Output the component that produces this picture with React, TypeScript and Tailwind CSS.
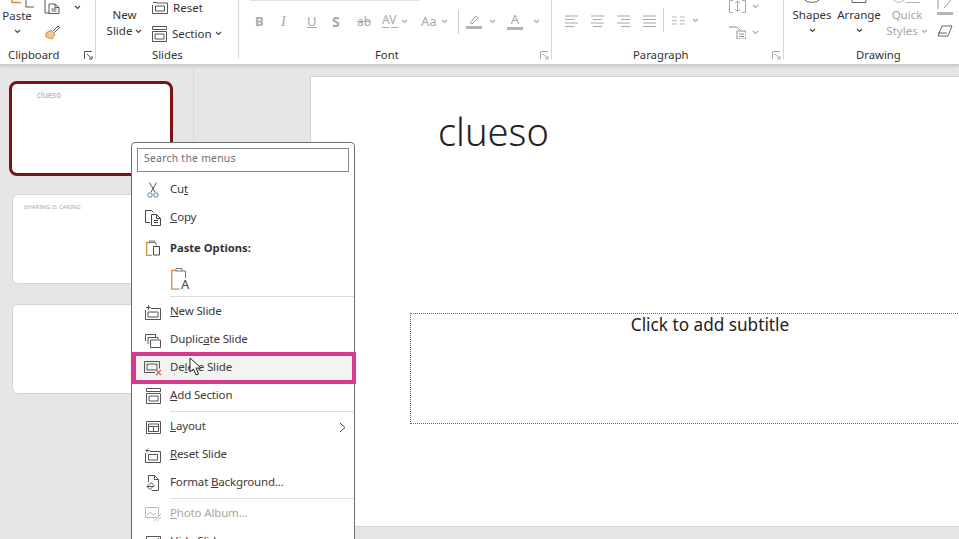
import type { ReactNode } from "react";

function Chev({ className = "", color = "#444" }: { className?: string; color?: string }) {
  return (
    <svg width="7" height="5" viewBox="0 0 7 5" className={className} fill="none" stroke={color} strokeWidth="1.1">
      <path d="M1 1l2.5 2.5L6 1" />
    </svg>
  );
}

function Launcher({ color = "#777" }: { color?: string }) {
  return (
    <svg width="9" height="9" viewBox="0 0 9 9" fill="none" stroke={color} strokeWidth="1">
      <path d="M.5 8V.5H8M3 3l5 5M8 5v3H5" />
    </svg>
  );
}

function Group({ width, label, labelPad, launcher, children }: { width: string; label: string; labelPad: string; launcher?: string; children: ReactNode }) {
  return (
    <div className={`flex h-[59px] shrink-0 flex-col border-r border-[#d6d6d6] ${width}`}>
      <div className="flex h-[47px] shrink-0 overflow-hidden">{children}</div>
      <div className={`flex h-[16px] shrink-0 items-center pr-[2px] text-[11.3px] leading-none text-[#333] ${labelPad}`}>
        <span>{label}</span>
        {launcher && (
          <span className="ml-auto">
            <Launcher color={launcher} />
          </span>
        )}
      </div>
    </div>
  );
}

function AlignIcon({ kind }: { kind: "l" | "c" | "r" | "j" }) {
  const short = kind === "l" ? "M1 6.5h9M1 13.5h9" : kind === "c" ? "M3 6.5h9M3 13.5h9" : kind === "r" ? "M5 6.5h9M5 13.5h9" : "M1 6.5h13M1 13.5h13";
  return (
    <svg width="15" height="15" viewBox="0 0 15 15" fill="none" stroke="#a8a8a8" strokeWidth="1" className="shrink-0">
      <path d={`M1 3h13M1 10h13 ${short}`} />
    </svg>
  );
}

function SlideGlyph({ kind }: { kind: string }) {
  const stroke = "#555";
  if (kind === "new")
    return (
      <svg width="16" height="15" viewBox="0 0 16 15" fill="none" stroke={stroke}>
        <path d="M6 3.500h9.500v11H.5V5M3 7h10v5H3zM3.500 0v5M1 2.500h5" />
      </svg>
    );
  if (kind === "dup")
    return (
      <svg width="16" height="15" viewBox="0 0 16 15" fill="none" stroke={stroke}>
        <path d="M.5 8V1.500h10V4M3 11V4.500h10V6M5.500 7h10v7.500h-10z" />
      </svg>
    );
  if (kind === "del")
    return (
      <svg width="18" height="16" viewBox="0 0 18 16" fill="none">
        <path d="M11 12.500H.5v-11h15v7M3 4h10v6H3z" stroke={stroke} />
        <path d="M12 10l5 5M17 10l-5 5" stroke="#e0604a" strokeWidth="1.300" />
      </svg>
    );
  if (kind === "sec")
    return (
      <svg width="15" height="16" viewBox="0 0 15 16" fill="none" stroke={stroke}>
        <path d="M.5.500h14v3H.5zM.5 5.500h14v10H.5zM3 8h9v5H3z" />
      </svg>
    );
  if (kind === "layout")
    return (
      <svg width="15" height="13" viewBox="0 0 15 13" fill="none" stroke={stroke}>
        <path d="M.5.500h14v12H.5zM2.500 3h10v7.500h-10zM2.500 5.500h10M7.500 5.500v5" />
      </svg>
    );
  if (kind === "reset")
    return (
      <svg width="16" height="15" viewBox="0 0 16 15" fill="none" stroke={stroke}>
        <path d="M5 3.500h10.500v11H.5V5M3.500 6.500h9v5.500h-9zM1 2.500h4M3 .5l-2 2 2 2" />
      </svg>
    );
  if (kind === "bg")
    return (
      <svg width="14" height="17" viewBox="0 0 14 17" fill="none" stroke={stroke}>
        <path d="M2.500 7V.5h6l4 4v11h-7M8.500.5v4h4M5 7.500l-4 4 3 3 4-4zM1 11.500h7" />
      </svg>
    );
  if (kind === "photo")
    return (
      <svg width="17" height="15" viewBox="0 0 17 15" fill="none" stroke="#bdbdbd">
        <path d="M.5.500h13v10H.5zM2 8l3-3 3 3 3-2M9 14l7-7M12 14l4-4" />
      </svg>
    );
  return (
    <svg width="15" height="13" viewBox="0 0 15 13" fill="none" stroke={stroke}>
      <path d="M.5.500h14v12H.5zM2 11L13 2" />
    </svg>
  );
}

type Item = { icon: string; text: ReactNode; active?: boolean; disabled?: boolean; arrow?: boolean };

function MenuRow({ item }: { item: Item }) {
  return (
    <div className={`flex h-[28px] items-center ${item.active ? "bg-[#f3f4f2]" : ""} ${item.disabled ? "text-[#a6a6a6]" : "text-[#3a3a3a]"}`}>
      <span className="flex w-[38px] shrink-0 justify-center pl-[4px]">
        <SlideGlyph kind={item.icon} />
      </span>
      <span className="pb-[2px] text-[11.5px] tracking-[-0.15px]">{item.text}</span>
      {item.arrow && (
        <svg width="7" height="11" viewBox="0 0 7 11" fill="none" stroke="#444" className="ml-auto mr-[8px]">
          <path d="M1 1l5 4.500-5 4.500" />
        </svg>
      )}
    </div>
  );
}

function Sep() {
  return <div className="my-[1px] ml-[38px] h-px bg-[#dcdcdc]" />;
}

function ContextMenu() {
  return (
    <div className="absolute left-[131px] top-[142px] h-[420px] w-[224px] rounded-t-[4px] border border-[#6e6e6e] bg-white pt-[5px]">
      <div className="mx-[5px] flex h-[24px] items-center border border-[#8a8a8a] px-[6px] pb-[3px] text-[10.300px] tracking-[0.3px] text-[#6e6e6e]">
        Search the menus
      </div>
      <div className="mt-[4px] flex h-[28px] items-center text-[11.5px] tracking-[-0.15px] text-[#3a3a3a]">
        <span className="flex w-[38px] justify-center pl-[4px]">
          <svg width="12" height="16" viewBox="0 0 12 16" fill="none">
            <path d="M2.500.5L8 10M9.500.5L4 10" stroke="#555" />
            <circle cx="3" cy="13" r="2.200" stroke="#5b7c99" />
            <circle cx="9" cy="13" r="2.200" stroke="#5b7c99" />
          </svg>
        </span>
        <span className="pb-[2px]">
          Cu<u>t</u>
        </span>
      </div>
      <div className="flex h-[28px] items-center text-[11.5px] tracking-[-0.15px] text-[#3a3a3a]">
        <span className="flex w-[38px] justify-center pl-[4px]">
          <svg width="16" height="16" viewBox="0 0 16 16" fill="none" stroke="#444">
            <path d="M5 12.500H.5V.5h6l2 2M6.500 4.500h5l4 4v7h-9zM11.500 4.500v4h4M9 10.500h4M9 12.500h4" />
          </svg>
        </span>
        <span className="pb-[2px]">
          <u>C</u>opy
        </span>
      </div>
      <div className="mt-[1px] flex h-[30px] items-center text-[11.200px] font-bold text-[#333]">
        <span className="flex w-[38px] justify-center pl-[4px]">
          <svg width="15" height="16" viewBox="0 0 15 16" fill="none">
            <path d="M4 2.500H.7v12.800H6" stroke="#d98b3a" strokeWidth="1.300" />
            <path d="M3.500 2.500h5V1h-5zM8.500 2.500H10v3" stroke="#777" />
            <path d="M7.500 6.500h6v8.500h-6z" stroke="#444" />
          </svg>
        </span>
        <span>Paste Options:</span>
      </div>
      <div className="flex h-[32px] items-center pl-[39px]">
        <svg width="21" height="24" viewBox="0 0 21 24" fill="none">
          <path d="M5 3.500H.8v18.700h8" stroke="#d98b3a" strokeWidth="1.300" />
          <path d="M5 4V1.500h6V4h3.500v7" stroke="#777" />
          <path d="M5 4h6" stroke="#777" />
          <text x="10" y="21.500" fontSize="13" fill="#444" fontFamily="'Noto Sans', sans-serif">
            A
          </text>
        </svg>
      </div>
      <Sep />
      <MenuRow item={{ icon: "new", text: <><u>N</u>ew Slide</> }} />
      <MenuRow item={{ icon: "dup", text: <>Duplic<u>a</u>te Slide</> }} />
      <MenuRow item={{ icon: "del", active: true, text: <>De<u>l</u>ete Slide</> }} />
      <MenuRow item={{ icon: "sec", text: <><u>A</u>dd Section</> }} />
      <Sep />
      <MenuRow item={{ icon: "layout", arrow: true, text: <><u>L</u>ayout</> }} />
      <MenuRow item={{ icon: "reset", text: <><u>R</u>eset Slide</> }} />
      <MenuRow item={{ icon: "bg", text: <>Format <u>B</u>ackground...</> }} />
      <Sep />
      <MenuRow item={{ icon: "photo", disabled: true, text: <><u>P</u>hoto Album...</> }} />
      <MenuRow item={{ icon: "hide", text: <><u>H</u>ide Slide</> }} />
    </div>
  );
}

export default function App() {
  return (
    <div className="relative h-[539px] w-[959px] overflow-hidden bg-[#e6e6e6] font-['Noto_Sans',sans-serif]">
      {/* ribbon */}
      <div className="flex h-[65px] overflow-hidden border-b border-[#cfcfcf] bg-white shadow-[0_1px_3px_rgba(0,0,0,0.18)]">
        <Group width="w-[96px]" label="Clipboard" labelPad="pl-[8px]" launcher="#555">
          <div className="flex w-[40px] flex-col items-center">
            <svg width="28" height="9" viewBox="0 0 28 9" fill="none" className="shrink-0">
              <path d="M6 0v2.500h9" stroke="#d98b3a" strokeWidth="1.400" />
              <path d="M20 0v7h11" stroke="#555" />
            </svg>
            <span className="mt-[-1px] pr-[6px] text-[11.500px] leading-[16px] text-[#333]">Paste</span>
            <Chev className="mr-[6px] mt-[5px]" />
          </div>
          <div className="flex flex-col pl-[4px]">
            <div className="flex items-center">
              <svg width="17" height="14" viewBox="0 0 17 14" fill="none" stroke="#555">
                <path d="M5 13H1V0M5 4h6l4 3.500v6H5zM11 4v3.500h4M7.500 9h5M7.500 11h5" />
              </svg>
              <Chev className="ml-[13px]" />
            </div>
            <svg width="16" height="16" viewBox="0 0 16 16" className="ml-[1px] mt-[10px]" fill="none">
              <path d="M1 9l5-3 4 4-3 5-6-2z" fill="#f0c796" stroke="#d98b3a" />
              <path d="M8 7l5-5 1.500 1.500-5 5" stroke="#555" />
            </svg>
          </div>
        </Group>

        <Group width="w-[143px]" label="Slides" labelPad="pl-[56px]">
          <div className="flex w-[56px] flex-col items-center pl-[1px] pt-[7px] text-[11.500px] leading-[16px] text-[#333]">
            <span>New</span>
            <span className="flex items-center gap-[3px]">
              Slide <Chev />
            </span>
          </div>
          <div className="flex flex-col text-[11.500px] text-[#333]">
            <div className="flex h-[15px] items-center">
              <svg width="16" height="13" viewBox="0 0 16 13" fill="none" stroke="#555" className="shrink-0">
                <path d="M5 2h10.500v10.500H.5V4M3.500 5h9v5h-9zM1 1.500h4" />
              </svg>
              <span className="ml-[5px]">Reset</span>
            </div>
            <div className="mt-[10px] flex items-center">
              <SlideGlyph kind="sec" />
              <span className="ml-[5px]">Section</span>
              <Chev className="ml-[3px]" />
            </div>
          </div>
        </Group>

        <Group width="w-[313px]" label="Font" labelPad="pl-[136px]" launcher="#aaa">
          <div className="flex flex-col">
            <div className="ml-[11px] h-px w-[170px] bg-[#e2e2e2]" />
            <div className="flex h-[39px] items-center pl-[16px] pt-[2px] text-[#a8a8a8]">
              <span className="w-[26px] text-[13px] font-bold">B</span>
              <span className="w-[26px] font-['Liberation_Serif',serif] text-[14px] italic">I</span>
              <span className="w-[25px] text-[13px] underline">U</span>
              <span className="w-[25px] text-[14px] font-bold">S</span>
              <span className="w-[25px] text-[12px] line-through">ab</span>
              <span className="w-[18px] text-[12px] leading-[11px]">
                AV
                <svg width="16" height="5" viewBox="0 0 16 5" fill="none" stroke="#a8a8a8">
                  <path d="M0 2.500h7M9 2.500h7" />
                </svg>
              </span>
              <Chev className="ml-[1px] mr-[13px]" color="#aaa" />
              <span className="w-[20px] text-[13px]">Aa</span>
              <Chev color="#aaa" />
              <div className="ml-[10px] mr-[7px] h-[24px] w-px bg-[#cfcfcf]" />
              <svg width="16" height="17" viewBox="0 0 16 17" fill="none" className="shrink-0">
                <path d="M4 10l6-7 2 2-6 6z" stroke="#a8a8a8" />
                <path d="M0 13h16v3H0z" fill="#b4b4b4" />
              </svg>
              <Chev className="ml-[7px] mr-[11px]" color="#aaa" />
              <span className="flex w-[16px] flex-col items-center text-[13px] leading-[13px]">
                A
                <span className="mt-[1px] h-[3px] w-[16px] bg-[#b4b4b4]" />
              </span>
              <Chev className="ml-[10px]" color="#aaa" />
            </div>
          </div>
        </Group>

        <Group width="w-[232px]" label="Paragraph" labelPad="pl-[81px]" launcher="#aaa">
          <div className="flex h-[40px] items-center pl-[12px]">
            <div className="flex gap-[11px]">
              <AlignIcon kind="l" />
              <AlignIcon kind="c" />
              <AlignIcon kind="r" />
              <AlignIcon kind="j" />
            </div>
            <div className="ml-[6px] h-[24px] w-px bg-[#cfcfcf]" />
            <svg width="13" height="9" viewBox="0 0 13 9" fill="none" stroke="#bcbcbc" className="ml-[8px]">
              <path d="M0 1h5M0 4.500h5M0 8h5M8 1h5M8 4.500h5M8 8h5" />
            </svg>
            <Chev className="ml-[7px]" color="#aaa" />
          </div>
          <div className="ml-[30px] flex flex-col">
            <div className="flex items-center">
              <svg width="17" height="13" viewBox="0 0 17 13" fill="none" stroke="#a8a8a8">
                <path d="M4 .5H.5v12H4M13 .5h3.500v12H13M8.500 1v10M6 3.500L8.500 1 11 3.500M6 9l2.500 2.500L11 9" />
              </svg>
              <Chev className="ml-[6px]" color="#aaa" />
            </div>
            <div className="mt-[13px] flex items-center">
              <svg width="17" height="13" viewBox="0 0 17 13" fill="none" stroke="#8f8f8f">
                <path d="M0 1h8l3 3M8 5h9v8H8zM10 8h5M10 10.500h5" />
              </svg>
              <Chev className="ml-[6px]" color="#aaa" />
            </div>
          </div>
        </Group>

        <div className="flex h-[59px] flex-1 flex-col">
          <div className="flex h-[47px] shrink-0 overflow-hidden pl-[6px] text-[11.500px] leading-[16px] text-[#333]">
            <div className="flex w-[44px] flex-col items-center">
              <svg width="16" height="3" viewBox="0 0 16 3" fill="none" stroke="#666" className="mb-[4px]">
                <path d="M1 0c2 3 12 3 14 0" />
              </svg>
              <span>Shapes</span>
              <Chev className="mt-[5px]" />
            </div>
            <div className="flex w-[50px] flex-col items-center">
              <svg width="16" height="3" viewBox="0 0 16 3" fill="none" stroke="#666" className="mb-[4px]">
                <path d="M1 0v2.500h14V0" />
              </svg>
              <span>Arrange</span>
              <Chev className="mt-[5px]" />
            </div>
            <div className="flex w-[46px] flex-col items-center text-[#a6a6a6]">
              <svg width="30" height="3" viewBox="0 0 30 3" fill="none" stroke="#b4b4b4" className="mb-[4px]">
                <path d="M2 0c2 3 8 3 10 0M14 2.500h14" />
              </svg>
              <span>Quick</span>
              <span className="flex items-center gap-[3px]">
                Styles <Chev color="#aaa" />
              </span>
            </div>
            <div className="flex flex-col pl-[7px]">
              <svg width="16" height="15" viewBox="0 0 16 15" fill="none">
                <path d="M1 0v9M14 0l-7 8" stroke="#9a9a9a" />
                <path d="M0 12h16v3H0z" fill="#b4b4b4" />
              </svg>
              <svg width="16" height="12" viewBox="0 0 16 12" fill="none" stroke="#666" className="mt-[10px]">
                <path d="M5 1h10l-4 10H1zM1 8l9 0" />
              </svg>
            </div>
          </div>
          <div className="flex h-[16px] shrink-0 items-center pl-[72px] text-[11.300px] leading-none text-[#333]">Drawing</div>
        </div>
      </div>

      {/* workspace */}
      <div className="flex h-[474px]">
        <div className="flex w-[194px] shrink-0 flex-col border-r border-[#d8d8d8] pl-[9px] pt-[16px]">
          <div className="h-[95px] w-[164px] rounded-[8px] border-[3px] border-[#7a1414] bg-white pl-[25px] pt-[5px] text-[8px] text-[#a8a8a8]">
            clueso
          </div>
          <div className="ml-[3px] mt-[18px] h-[90px] w-[158px] rounded-[6px] border border-[#d4d4d4] bg-white pl-[11px] pt-[8px] text-[5.800px] tracking-[0.1px] text-[#a8a8a8]">
            SHARING IS CARING
          </div>
          <div className="ml-[3px] mt-[20px] h-[90px] w-[158px] rounded-[6px] border border-[#d4d4d4] bg-white" />
        </div>
        <div className="min-w-0 flex-1 pl-[116px] pt-[11px]">
          <div className="h-[451px] w-[800px] border border-[#d4d4d4] bg-white pl-[99px]">
            <div className="pl-[28px] pt-[27px] text-[38px] font-light leading-[54px] text-[#222]">clueso</div>
            <div className="mt-[155px] h-[111px] w-[600px] border border-dotted border-[#666] text-center text-[17.200px] leading-[22px] text-[#222]">
              Click to add subtitle
            </div>
          </div>
        </div>
      </div>

      <ContextMenu />

      {/* pink callout over the Delete Slide row */}
      <div className="absolute left-[132px] top-[352px] h-[32px] w-[224px] border-[4px] border-[#d63a8c]" />
      <svg width="14" height="20" viewBox="0 0 14 20" className="absolute left-[189px] top-[357px]" fill="#fff" stroke="#222">
        <path d="M1 1v14l3.500-3 2.500 6 2.500-1-2.500-6H12z" />
      </svg>
    </div>
  );
}
